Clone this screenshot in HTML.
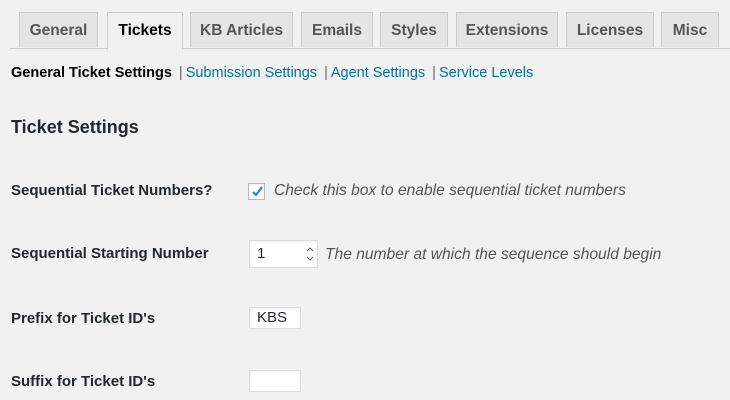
<html><head><style>
body{margin:0;width:730px;height:400px;background:#f1f1f1;font-family:"Liberation Sans",sans-serif;overflow:hidden;position:relative;color:#23282d}
.tabline{position:absolute;left:10px;right:0;top:48px;border-top:1px solid #ccc}
.tab{position:absolute;top:12px;height:35px;background:#e5e5e5;border:1px solid #ccc;border-bottom:none;font-weight:bold;font-size:15.5px;color:#555;text-align:center;line-height:36px;box-sizing:border-box}
.tab.a{background:#f1f1f1;color:#000;height:38px}
.sub{position:absolute;top:65px;left:11px;font-size:14.5px;white-space:nowrap}
.sub b{color:#000}.sub a{color:#0073aa;text-decoration:none}.sub span{color:#666;margin:0 3px 0 7px}
.h{position:absolute;left:11px;top:117px;font-size:18px;font-weight:bold}
.l{position:absolute;left:11px;font-size:15px;font-weight:bold;color:#23282d}
.d{position:absolute;font-size:15.6px;font-style:italic;color:#555}
.in{position:absolute;background:#fff;border:1px solid #ddd;box-sizing:border-box;font-size:15px;padding-left:7px;box-shadow:inset 0 1px 2px rgba(0,0,0,.07)}
</style></head><body>
<div class="tabline"></div>
<div class="tab" style="left:19px;width:79px">General</div>
<div class="tab a" style="left:107px;width:76px">Tickets</div>
<div class="tab" style="left:190px;width:103px">KB Articles</div>
<div class="tab" style="left:301px;width:72px">Emails</div>
<div class="tab" style="left:380px;width:68px">Styles</div>
<div class="tab" style="left:456px;width:102px">Extensions</div>
<div class="tab" style="left:566px;width:88px">Licenses</div>
<div class="tab" style="left:661px;width:58px">Misc</div>
<div class="sub"><b>General Ticket Settings</b><span>|</span><a>Submission Settings</a><span>|</span><a>Agent Settings</a><span>|</span><a>Service Levels</a></div>
<div class="h">Ticket Settings</div>
<div class="l" style="top:182px">Sequential Ticket Numbers?</div>
<div class="in" style="left:248px;top:183px;width:17px;height:17px;padding:0;border-color:#b4b9be"><svg width="15" height="15" viewBox="0 0 15 15" style="position:absolute;left:1px;top:0"><path d="M3 8l3 3 6-8" stroke="#1e8cbe" stroke-width="2.2" fill="none"/></svg></div>
<div class="d" style="left:274px;top:182px">Check this box to enable sequential ticket numbers</div>
<div class="l" style="top:245px">Sequential Starting Number</div>
<div class="in" style="left:249px;top:240px;width:69px;height:28px;line-height:26px">1<svg width="8" height="16" style="position:absolute;right:3px;top:5px"><path d="M1 5l3-3 3 3M1 11l3 3 3-3" stroke="#555" fill="none"/></svg></div>
<div class="d" style="left:325px;top:246px">The number at which the sequence should begin</div>
<div class="l" style="top:310px">Prefix for Ticket ID's</div>
<div class="in" style="left:249px;top:307px;width:52px;height:22px;line-height:20px">KBS</div>
<div class="l" style="top:373px">Suffix for Ticket ID's</div>
<div class="in" style="left:249px;top:370px;width:52px;height:22px"></div>
</body></html>
